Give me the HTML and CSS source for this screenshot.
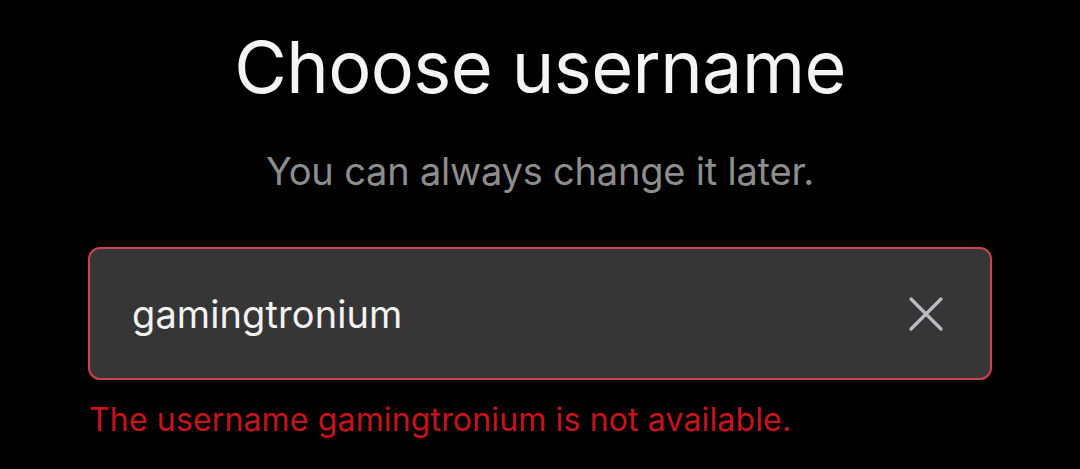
FILE: index.html
```html
<!DOCTYPE html>
<html>
<head>
<meta charset="utf-8">
<link rel="stylesheet" href="styles.css">
</head>
<body>
<main class="screen">
  <h1 class="title">Choose username</h1>
  <p class="subtitle">You can always change it later.</p>
  <div class="field">
    <span class="value">gamingtronium</span>
    <svg class="clear" viewBox="0 0 36 36" width="36" height="36">
      <path d="M3 3 L33 33 M33 3 L3 33" stroke="#b9bcc2" stroke-width="3.2" stroke-linecap="round" fill="none"/>
    </svg>
  </div>
  <p class="error">The username gamingtronium is not available.</p>
</main>
</body>
</html>
```

FILE: styles.css
```css
html, body {
  margin: 0;
  padding: 0;
  background: #000;
}
body {
  font-family: Inter, "Noto Sans", sans-serif;
  width: 1080px;
  height: 469px;
  overflow: hidden;
}
.screen {
  display: flex;
  flex-direction: column;
  padding: 0 88px;
}
.title {
  margin: 22px 0 0;
  text-align: center;
  font-weight: 400;
  font-size: 72px;
  line-height: 90px;
  color: #f4f4f4;
  letter-spacing: -0.6px;
}
.subtitle {
  margin: 36px 0 0;
  text-align: center;
  font-size: 38px;
  line-height: 46px;
  color: #8d8d8d;
  letter-spacing: -0.2px;
}
.field {
  margin-top: 53px;
  height: 133px;
  box-sizing: border-box;
  border: 2.5px solid #cc4250;
  border-radius: 12px;
  background: #363636;
  display: flex;
  align-items: center;
  justify-content: space-between;
  padding: 0 46px 0 42px;
}
.value {
  font-size: 38px;
  color: #f2f2f2;
  letter-spacing: 0.1px;
}
.clear {
  display: block;
}
.error {
  margin: 20px 0 0 1px;
  font-size: 32px;
  line-height: 40px;
  color: #c7141c;
  letter-spacing: 0.15px;
}
```
